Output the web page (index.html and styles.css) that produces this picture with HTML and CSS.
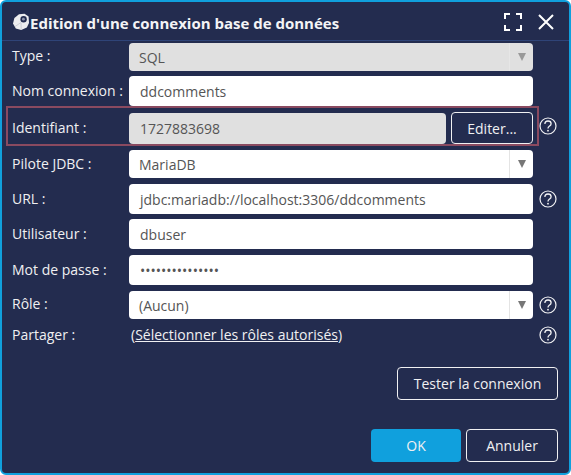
FILE: index.html
```html
<!DOCTYPE html>
<html lang="fr">
<head>
<meta charset="utf-8">
<title>Edition d'une connexion base de données</title>
<link rel="stylesheet" href="styles.css">
</head>
<body>
<div class="dialog">
  <header class="titlebar">
    <svg class="logo" width="18" height="18" viewBox="0 0 18 18"><path d="M7 1.2 12.5 .8 16.6 3.4 17 10l-2.2 4.4-5.6 2.6-5.4-1.6L1 10.5l1.4-5.5z" fill="#ececee"/><path d="M9 9.5 3 13.5M9 9.5l.2 7" stroke="#c4c6cf" stroke-width=".8"/><circle cx="11.6" cy="6.2" r="3.2" fill="#232c4f"/><circle cx="11.4" cy="6.2" r="1.4" fill="#8f95ab"/></svg>
    <h1 class="title">Edition d'une connexion base de données</h1>
    <svg class="maxi" width="18" height="18" viewBox="0 0 18 18"><path d="M1 6V1h5M12 1h5v5M17 12v5h-5M6 17H1v-5" fill="none" stroke="#fff" stroke-width="2"/></svg>
    <svg class="close" width="16" height="16" viewBox="0 0 16 16"><path d="M1 1l14 14M15 1L1 15" fill="none" stroke="#fff" stroke-width="2"/></svg>
  </header>
  <main class="form">
    <div class="row r-type">
      <label class="label">Type :</label>
      <div class="select disabled"><span class="value">SQL</span><span class="arrow"></span></div>
    </div>
    <div class="row r-nom">
      <label class="label">Nom connexion :</label>
      <div class="input">ddcomments</div>
    </div>
    <div class="row r-id">
      <div class="marked">
        <label class="label">Identifiant :</label>
        <div class="input disabled">1727883698</div>
        <button class="btn edit">Editer...</button>
      </div>
      <svg class="help" width="18" height="18" viewBox="0 0 18 18"><use href="#q"/></svg>
    </div>
    <div class="row r-pilote">
      <label class="label">Pilote JDBC :</label>
      <div class="select"><span class="value">MariaDB</span><span class="arrow"></span></div>
    </div>
    <div class="row r-url">
      <label class="label">URL :</label>
      <div class="input">jdbc:mariadb://localhost:3306/ddcomments</div>
      <svg class="help" width="18" height="18" viewBox="0 0 18 18"><use href="#q"/></svg>
    </div>
    <div class="row r-user">
      <label class="label">Utilisateur :</label>
      <div class="input">dbuser</div>
    </div>
    <div class="row r-pass">
      <label class="label">Mot de passe :</label>
      <div class="input dots">•••••••••••••••</div>
    </div>
    <div class="row r-role">
      <label class="label">Rôle :</label>
      <div class="select"><span class="value">(Aucun)</span><span class="arrow"></span></div>
      <svg class="help" width="18" height="18" viewBox="0 0 18 18"><use href="#q"/></svg>
    </div>
    <div class="row r-share">
      <label class="label">Partager :</label>
      <div class="share">(<a class="link">Sélectionner les rôles autorisés</a>)</div>
      <svg class="help" width="18" height="18" viewBox="0 0 18 18"><use href="#q"/></svg>
    </div>
    <div class="test-row"><button class="btn test">Tester la connexion</button></div>
    <div class="actions">
      <button class="btn ok">OK</button>
      <button class="btn cancel">Annuler</button>
    </div>
  </main>
</div>
<svg class="defs" width="0" height="0"><defs><g id="q"><circle cx="9" cy="9" r="8" fill="none" stroke="#f2f2f4" stroke-width="1.2"/><path d="M5.9 7C5.9 5.1 7.3 4 9 4s3.1 1.1 3.1 2.7c0 1.4-.9 2-1.8 2.6-.8.6-1.3 1.1-1.3 2.2" fill="none" stroke="#f2f2f4" stroke-width="1.3"/><circle cx="9" cy="13.7" r=".9" fill="#f2f2f4"/></g></defs></svg>
</body>
</html>
```
FILE: styles.css
```css
* { box-sizing: border-box; }
html, body { margin: 0; padding: 0; }
body { width: 571px; height: 475px; background: #fff; font-family: "Open Sans", sans-serif; font-size: 14px; color: #f0f0f2; overflow: hidden; }
.dialog { width: 571px; height: 475px; background: #232c4f; border: 2px solid #10a0dd; border-radius: 6px; display: flex; flex-direction: column; }
.titlebar { height: 39px; display: flex; align-items: center; padding: 4px 15px 0 10px; border-bottom: 1px solid #2f4478; flex: none; }
.logo { flex: none; margin-bottom: 3px; }
.title { flex: 1; margin: 0; font-size: 15px; font-weight: 700; color: #f4f4f6; white-space: nowrap; }
.maxi { margin: 0 16px 2px 0; }
.close { margin-bottom: 2px; }
.form { flex: 1; padding: 0 0 0 10px; display: flex; flex-direction: column; }
.row { display: flex; align-items: center; width: 545px; }
.label { width: 117px; flex: none; white-space: nowrap; line-height: 18px; }
.input, .select { width: 404px; flex: none; background: #fff; color: #555; border-radius: 4px; display: flex; align-items: center; padding-left: 11px; height: 100%; white-space: nowrap; }
.select { padding-left: 10px; }
.disabled { background: #e0e0e0; }
.value { flex: 1; }
.arrow { flex: none; width: 24px; height: 100%; border-left: 1px solid #e4e4e4; display: flex; align-items: center; justify-content: center; }
.arrow::after { content: ""; border-left: 4.5px solid transparent; border-right: 4.5px solid transparent; border-top: 8px solid #777; }
.disabled .arrow { border-left-color: #e6e6e6; }
.disabled .arrow::after { border-top-color: #999; }
.help { flex: none; margin-left: 6px; }
.r-type { height: 28px; margin-top: 2px; }
.r-type .label { padding-bottom: 3px; }
.r-nom { height: 30px; margin-top: 5px; }
.r-id { height: 40px; margin-left: -6px; width: 551px; }
.r-id .help { margin-left: 0; }
.r-pilote { height: 28px; margin-top: 4px; }
.r-url { height: 30px; margin-top: 6px; }
.r-user { height: 30px; margin-top: 5px; }
.r-pass { height: 30px; margin-top: 6px; }
.r-role { height: 28px; margin-top: 6px; }
.r-role .label { padding-bottom: 2px; }
.r-share { height: 18px; margin-top: 7px; }
.marked { display: flex; align-items: stretch; flex: none; width: 533px; height: 40px; padding: 4px 4px 0 4px; border: 2px solid #8a4a60; }
.marked .label { align-self: center; }
.marked .input { width: 317px; height: auto; margin-top: 1px; }
.btn { font-family: inherit; font-size: 14px; background: #232c4f; color: #f0f0f2; border: 1px solid #f0f0f2; border-radius: 4px; padding: 0; white-space: nowrap; }
.edit { width: 82px; margin-left: 5px; }
.share { width: 404px; flex: none; padding-left: 2px; line-height: 18px; }
.link { text-decoration: underline; color: #f0f0f2; }
.test-row { display: flex; justify-content: flex-end; width: 546px; margin-top: 23px; }
.test { width: 161px; height: 33px; }
.actions { display: flex; justify-content: flex-end; gap: 5px; width: 546px; margin-top: 29px; }
.ok { width: 90px; height: 33px; background: #10a0dd; border: none; }
.cancel { width: 92px; height: 33px; }
.defs { position: absolute; }
```
